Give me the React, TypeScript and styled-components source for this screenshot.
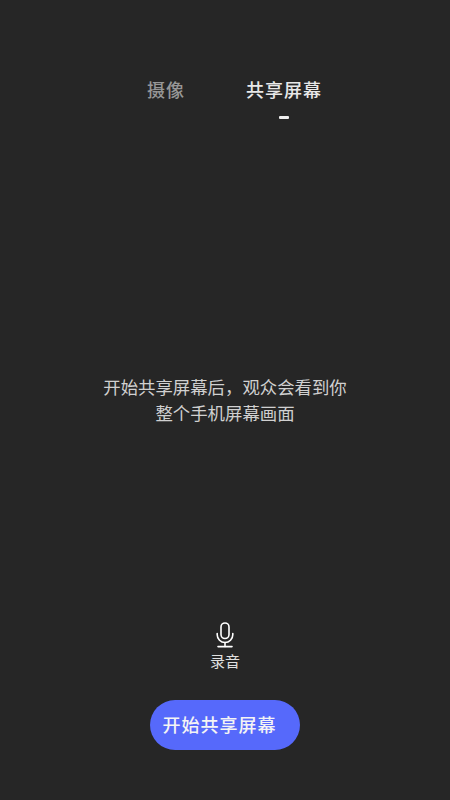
import styled, { createGlobalStyle } from 'styled-components';

const GlobalStyle = createGlobalStyle`
  html, body {
    margin: 0;
    padding: 0;
    background: #262626;
  }
  * {
    box-sizing: border-box;
  }
`;

export default function App() {
  return (
    <>
      <GlobalStyle />
      <Screen>
        <Tabs>
          <Tab>摄像</Tab>
          <Tab $active>共享屏幕</Tab>
        </Tabs>
        <Message>
          开始共享屏幕后，观众会看到你
          <br />
          整个手机屏幕画面
        </Message>
        <MicButton>
          <svg width="24" height="26" viewBox="0 0 24 26" fill="none" stroke="#fff" strokeWidth="1.6" strokeLinecap="round">
            <rect x="8" y="1" width="8" height="15.5" rx="4" />
            <path d="M4.2 11.5v1.2a7.8 7.8 0 0 0 15.6 0v-1.2" />
            <path d="M12 20.5v4" />
            <path d="M5 24.6h14" />
          </svg>
          <MicLabel>录音</MicLabel>
        </MicButton>
        <StartButton>开始共享屏幕</StartButton>
      </Screen>
    </>
  );
}

const Screen = styled.div`
  width: 450px;
  height: 800px;
  display: flex;
  flex-direction: column;
  align-items: center;
  background: #262626;
  font-family: "Noto Sans CJK SC", "Noto Sans", sans-serif;
  overflow: hidden;
`;

const Tabs = styled.div`
  display: flex;
  gap: 61px;
  margin-top: 77px;
  height: 48px;
  margin-left: 19px;
`;

const Tab = styled.div<{ $active?: boolean }>`
  position: relative;
  font-size: 18px;
  line-height: 24px;
  letter-spacing: 1px;
  font-weight: 500;
  color: ${p => (p.$active ? '#e8e8e8' : '#969696')};

  &::after {
    content: '';
    display: ${p => (p.$active ? 'block' : 'none')};
    position: absolute;
    left: 50%;
    top: 39px;
    width: 10px;
    height: 3px;
    margin-left: -5px;
    border-radius: 1px;
    background: #eeeeee;
  }
`;

const Message = styled.div`
  margin-top: 249px;
  font-size: 17.4px;
  line-height: 26px;
  text-align: center;
  color: #d0d0d0;
`;

const MicButton = styled.div`
  display: flex;
  flex-direction: column;
  align-items: center;
  margin-top: auto;
`;

const MicLabel = styled.div`
  margin-top: 2px;
  font-size: 15px;
  line-height: 22px;
  color: #e0e0e0;
`;

const StartButton = styled.button`
  width: 150px;
  height: 50px;
  margin-top: 28px;
  margin-bottom: 50px;
  padding: 0 11px 2px 0;
  border: none;
  border-radius: 25px;
  background: #5669fb;
  color: #f4f4f4;
  font-family: inherit;
  font-size: 18px;
  font-weight: 500;
  letter-spacing: 1px;
`;
